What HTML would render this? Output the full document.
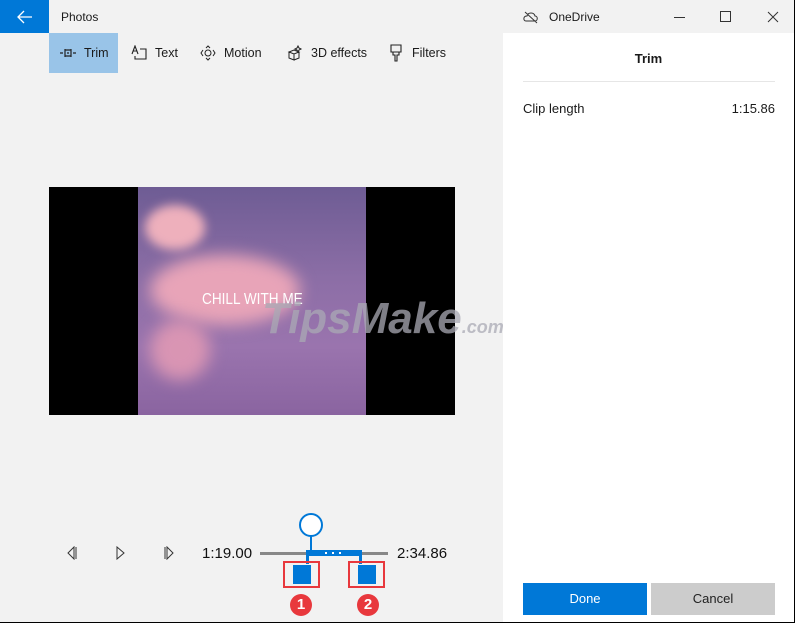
<!DOCTYPE html>
<html><head><style>
*{margin:0;padding:0;box-sizing:border-box}
body{width:795px;height:623px;background:#000;font-family:"Liberation Sans",sans-serif;overflow:hidden;position:relative}
.win{position:absolute;left:0;top:0;width:794px;height:622px;background:#f2f2f2}
.a{position:absolute}
.t{font-size:13px;color:#1a1a1a}
</style></head><body><div class="win">
<div class="a" style="left:0;top:0;width:49px;height:33px;background:#0078d7"></div>
<svg class="a" style="left:17px;top:10px" width="16" height="14"><path d="M1 7H15M7 1L1 7L7 13" stroke="#fff" stroke-width="1.3" fill="none"/></svg>
<div class="a t" style="left:61px;top:10px;font-size:12px">Photos</div>
<div class="a" style="left:49px;top:33px;width:69px;height:40px;background:#99c4e8"></div>
<svg class="a" style="left:59px;top:46px" width="18" height="14"><path d="M1 7H4M14 7H17M6 3V11M12 3V11M6 4H12M6 10H12M8 7H10" stroke="#222" stroke-width="1.2" fill="none"/></svg>
<div class="a t" style="left:84px;top:46px;font-size:12.5px">Trim</div>
<svg class="a" style="left:131px;top:45px" width="18" height="16"><path d="M1 9L4 1L7 9M2 6H6M9 4H15V14H4V11" stroke="#222" stroke-width="1.1" fill="none"/></svg>
<div class="a t" style="left:155px;top:46px;font-size:12.5px">Text</div>
<svg class="a" style="left:200px;top:45px" width="16" height="16"><circle cx="8" cy="8" r="3" stroke="#222" fill="none"/><path d="M3 5L1 8L3 11M13 5L15 8L13 11M6 3L8 1L10 3M6 13L8 15L10 13" stroke="#222" fill="none"/></svg>
<div class="a t" style="left:224px;top:46px;font-size:12.5px">Motion</div>
<svg class="a" style="left:287px;top:44px" width="18" height="18"><path d="M2 8L7 6L12 8L7 10ZM2 8V14L7 16V10M12 8V14L7 16M11 2L12 4L14 5L12 6L11 8L10 6L8 5L10 4Z" stroke="#222" fill="none"/></svg>
<div class="a t" style="left:311px;top:46px;font-size:12.5px">3D effects</div>
<svg class="a" style="left:390px;top:44px" width="12" height="18"><path d="M1 1H11V8H1ZM3 8V11H5V17H7V11H9V8" stroke="#222" stroke-width="1.1" fill="none"/></svg>
<div class="a t" style="left:412px;top:46px;font-size:12.5px">Filters</div>
<svg class="a" style="left:523px;top:10px" width="16" height="14"><path d="M3 11C0 11 0 6 4 6C5 2 11 2 12 6C15 6 15 11 12 11Z M2 2L14 13" stroke="#333" fill="none"/></svg>
<div class="a t" style="left:549px;top:10px;font-size:12px">OneDrive</div>
<div class="a" style="left:674px;top:17px;width:11px;height:1px;background:#333"></div>
<div class="a" style="left:720px;top:11px;width:11px;height:11px;border:1px solid #333"></div>
<svg class="a" style="left:767px;top:11px" width="12" height="12"><path d="M1 1L11 11M11 1L1 11" stroke="#333"/></svg>
<div class="a" style="left:503px;top:33px;width:291px;height:589px;background:#fff"></div>
<div class="a t" style="left:503px;top:51px;width:291px;text-align:center;font-size:13px;font-weight:bold">Trim</div>
<div class="a" style="left:523px;top:81px;width:252px;height:1px;background:#e6e6e6"></div>
<div class="a t" style="left:523px;top:101px">Clip length</div>
<div class="a t" style="left:700px;top:101px;width:75px;text-align:right">1:15.86</div>
<div class="a" style="left:523px;top:583px;width:124px;height:32px;background:#0078d7;color:#fff;font-size:13px;text-align:center;line-height:32px">Done</div>
<div class="a" style="left:651px;top:583px;width:124px;height:32px;background:#ccc;color:#222;font-size:13px;text-align:center;line-height:32px">Cancel</div>
<div class="a" style="left:49px;top:187px;width:406px;height:228px;background:#000"></div>
<div class="a" style="left:138px;top:187px;width:228px;height:228px;background:linear-gradient(180deg,#6e5c94 0%,#8c6ea6 40%,#9a74ae 70%,#8a64a0 100%);overflow:hidden">
<div class="a" style="left:7px;top:18px;width:60px;height:45px;border-radius:50%;background:#eeb0bc;filter:blur(5px)"></div>
<div class="a" style="left:12px;top:68px;width:150px;height:70px;border-radius:50%;background:#e8a4b8;filter:blur(8px)"></div>
<div class="a" style="left:12px;top:133px;width:60px;height:60px;border-radius:50%;background:#d995b3;filter:blur(8px)"></div>
</div>
<div class="a" style="left:202px;top:291px;color:#fff;font-size:16px;letter-spacing:0px;transform:scaleX(.85);transform-origin:left">CHILL WITH ME</div>
<div class="a" style="left:262px;top:294px;color:rgba(170,170,180,.75);font-size:44px;font-weight:bold;font-style:italic">TipsMake<span style="font-size:18px">.com</span></div>
<svg class="a" style="left:66px;top:546px" width="12" height="14"><path d="M8 1L2 7L8 13ZM10 1V13" stroke="#333" fill="none"/></svg>
<svg class="a" style="left:116px;top:546px" width="10" height="14"><path d="M1 1L8 7L1 13Z" stroke="#333" fill="none"/></svg>
<svg class="a" style="left:163px;top:546px" width="12" height="14"><path d="M4 1L10 7L4 13ZM2 1V13" stroke="#333" fill="none"/></svg>
<div class="a" style="left:202px;top:545px;font-size:15px;color:#111">1:19.00</div>
<div class="a" style="left:397px;top:545px;font-size:15px;color:#111">2:34.86</div>
<div class="a" style="left:260px;top:552px;width:128px;height:3px;background:#888"></div>
<div class="a" style="left:306px;top:550px;width:56px;height:6px;background:#0078d7"></div>
<div class="a" style="left:325px;top:552px;width:2px;height:2px;background:#fff"></div>
<div class="a" style="left:332px;top:552px;width:2px;height:2px;background:#fff"></div>
<div class="a" style="left:339px;top:552px;width:2px;height:2px;background:#fff"></div>
<div class="a" style="left:299px;top:513px;width:24px;height:24px;border-radius:50%;border:2px solid #0078d7;background:#fff"></div>
<div class="a" style="left:310px;top:536px;width:2px;height:15px;background:#0078d7"></div>
<div class="a" style="left:306px;top:550px;width:3px;height:14px;background:#0078d7"></div>
<div class="a" style="left:359px;top:550px;width:3px;height:14px;background:#0078d7"></div>
<div class="a" style="left:293px;top:565px;width:18px;height:19px;background:#0078d7"></div>
<div class="a" style="left:358px;top:565px;width:18px;height:19px;background:#0078d7"></div>
<div class="a" style="left:283px;top:561px;width:37px;height:27px;border:2px solid #e8383d"></div>
<div class="a" style="left:348px;top:561px;width:37px;height:27px;border:2px solid #e8383d"></div>
<div class="a" style="left:290px;top:594px;width:22px;height:22px;border-radius:50%;background:#e8383d;color:#fff;font-weight:bold;font-size:15px;text-align:center;line-height:22px">1</div>
<div class="a" style="left:357px;top:594px;width:22px;height:22px;border-radius:50%;background:#e8383d;color:#fff;font-weight:bold;font-size:15px;text-align:center;line-height:22px">2</div>
</div></body></html>
